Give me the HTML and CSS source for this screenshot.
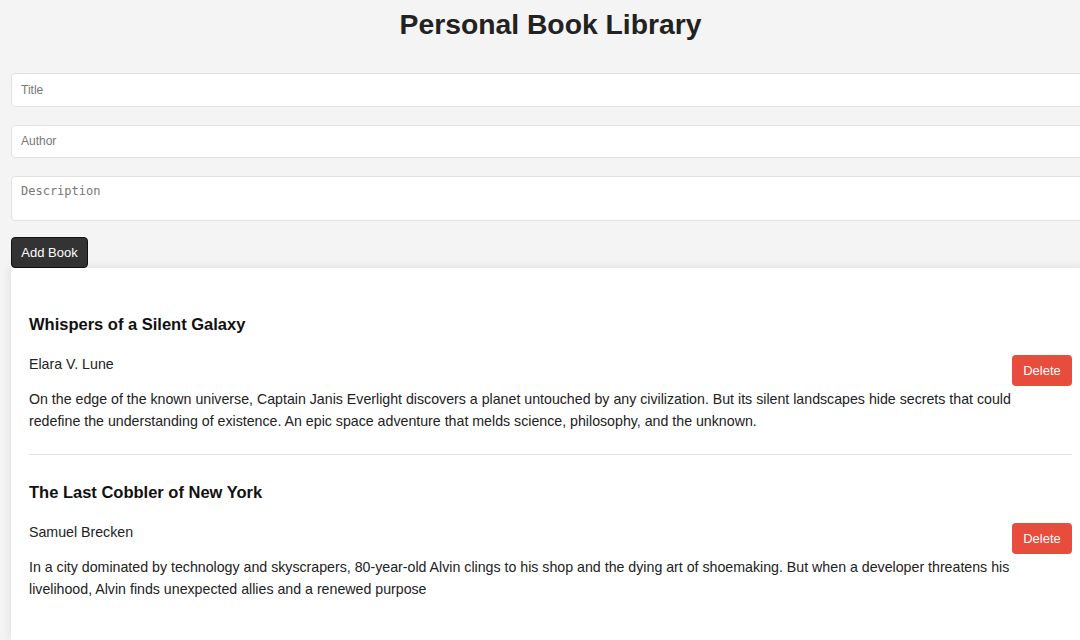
FILE: index.html
```html
<!DOCTYPE html>
<html lang="en">
<head>
<meta charset="utf-8">
<title>Personal Book Library</title>
<link rel="stylesheet" href="styles.css">
</head>
<body>
<div class="app">
  <h1 class="page-title">Personal Book Library</h1>
  <form class="book-form">
    <input class="field" type="text" placeholder="Title">
    <input class="field" type="text" placeholder="Author">
    <textarea class="field field-area" placeholder="Description"></textarea>
    <button class="add-btn" type="button">Add Book</button>
  </form>
  <div class="book-list">
    <div class="book">
      <div class="book-info">
        <h3 class="book-title">Whispers of a Silent Galaxy</h3>
        <p class="book-author">Elara V. Lune</p>
        <p class="book-desc">On the edge of the known universe, Captain Janis Everlight discovers a planet untouched by any civilization. But its silent landscapes hide secrets that could redefine the understanding of existence. An epic space adventure that melds science, philosophy, and the unknown.</p>
      </div>
      <button class="delete-btn" type="button">Delete</button>
    </div>
    <div class="book">
      <div class="book-info">
        <h3 class="book-title">The Last Cobbler of New York</h3>
        <p class="book-author">Samuel Brecken</p>
        <p class="book-desc">In a city dominated by technology and skyscrapers, 80-year-old Alvin clings to his shop and the dying art of shoemaking. But when a developer threatens his livelihood, Alvin finds unexpected allies and a renewed purpose</p>
      </div>
      <button class="delete-btn" type="button">Delete</button>
    </div>
  </div>
</div>
</body>
</html>
```
FILE: styles.css
```css
html, body {
  margin: 0;
  padding: 0;
  overflow: hidden;
}
body {
  background: #f4f4f4;
  font-family: "Liberation Sans", Arial, sans-serif;
  color: #222;
}
.app {
  margin-left: 11px;
  width: 1079px;
}
.page-title {
  margin: 8px 0 0;
  font-size: 28.3px;
  line-height: 32px;
  text-align: center;
  color: #222;
}
.book-form {
  display: flex;
  flex-direction: column;
  align-items: flex-start;
  margin-top: 33px;
}
.field {
  display: block;
  box-sizing: border-box;
  width: 1100px;
  height: 33.5px;
  margin: 0 0 18px;
  padding: 0 9px;
  border: 1px solid #e2e2e2;
  border-radius: 4px;
  background: #fff;
  font-family: "Liberation Sans", Arial, sans-serif;
  font-size: 12px;
  color: #222;
}
.field::placeholder {
  color: #777;
}
.field-area {
  height: 45px;
  padding: 7px 9px;
  margin-bottom: 16px;
  resize: none;
  font-family: "DejaVu Sans Mono", "Liberation Mono", monospace;
  font-size: 12px;
}
.add-btn {
  box-sizing: border-box;
  width: 77px;
  height: 31px;
  padding: 0;
  border: 1px solid #111;
  border-radius: 4px;
  background: #333;
  color: #fff;
  font-family: "Liberation Sans", Arial, sans-serif;
  font-size: 13px;
}
.book-list {
  position: relative;
  box-sizing: border-box;
  width: 1079px;
  padding: 19px 18px 20px;
  background: #fff;
  box-shadow: 0 0 10px rgba(0, 0, 0, 0.1);
}
.book {
  display: flex;
  align-items: center;
  padding: 25px 0 22px;
  border-bottom: 1px solid #e2e2e2;
}
.book:last-child {
  border-bottom: none;
}
.book-info {
  flex: 1;
}
.book-title {
  margin: 0 0 16px;
  font-size: 16.5px;
  line-height: 25px;
  color: #111;
}
.book-author {
  margin: 0 0 12px;
  font-size: 14.2px;
  line-height: 23px;
  color: #222;
}
.book-desc {
  margin: 0;
  font-size: 14.2px;
  line-height: 22px;
  color: #222;
}
.delete-btn {
  flex-shrink: 0;
  box-sizing: border-box;
  width: 60px;
  height: 31px;
  margin-bottom: 4px;
  padding: 0;
  border: none;
  border-radius: 4px;
  background: #e74c3c;
  color: #fff;
  font-family: "Liberation Sans", Arial, sans-serif;
  font-size: 13px;
}
```
